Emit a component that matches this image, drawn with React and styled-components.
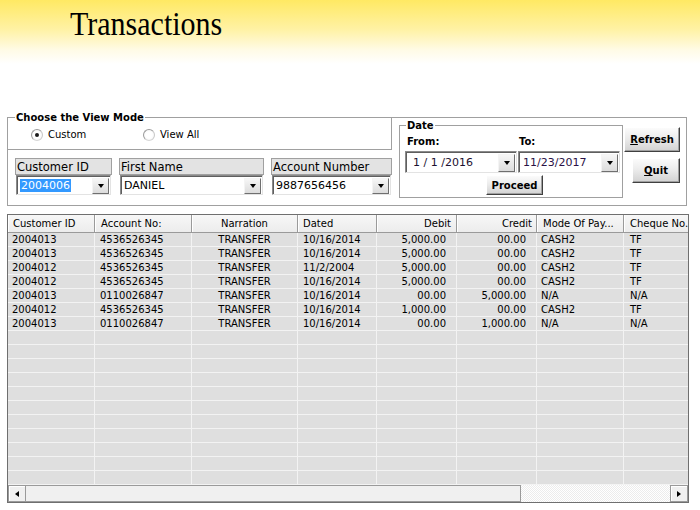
import React from 'react';
import styled, { createGlobalStyle } from 'styled-components';

const GlobalStyle = createGlobalStyle`
  html, body {
    margin: 0;
    padding: 0;
    background: #fff;
  }
  body {
    width: 700px;
    height: 510px;
    overflow: hidden;
    font-family: 'DejaVu Sans', Tahoma, sans-serif;
    font-size: 10px;
    color: #000;
  }
`;

const Window = styled.div`
  width: 700px;
  height: 510px;
  background: linear-gradient(to bottom, #ffe963 0px, #fff2a6 30px, #fffbe6 50px, #ffffff 64px, #ffffff 100%);
`;

const Banner = styled.header`
  height: 117px;
  box-sizing: border-box;
  padding: 6px 0 0 70px;
`;

const Title = styled.h1`
  margin: 0;
  display: inline-block;
  font-family: 'Liberation Serif', 'Times New Roman', serif;
  font-weight: normal;
  font-size: 30px;
  line-height: 32px;
  transform: scaleY(1.12);
  transform-origin: top left;
`;

const Panel = styled.section`
  margin-left: 7px;
  width: 680px;
  height: 89px;
  box-sizing: border-box;
  border: 1px solid #a0a0a0;
  display: flex;
  align-items: flex-start;
`;

const LeftColumn = styled.div`
  width: 384px;
  display: flex;
  flex-direction: column;
`;

const GroupBox = styled.div`
  box-sizing: border-box;
  border: 1px solid #a0a0a0;
  background: #fff;
`;

const ViewModeBox = styled(GroupBox)`
  margin: -1px 0 0 -1px;
  width: 385px;
  height: 33px;
`;

const DateBox = styled(GroupBox)`
  margin: 7px 0 0 7px;
  width: 224px;
  height: 73px;
`;

const Caption = styled.div`
  width: fit-content;
  margin: -7px 0 0 ${(p) => p.$indent}px;
  padding: 0 1px;
  background: #fff;
  font-weight: bold;
  font-size: 10px;
  line-height: 13px;
`;

const RadioRow = styled.div`
  display: flex;
  align-items: center;
  height: 13px;
  margin-top: 4px;
  padding-left: 23px;
`;

const RadioItem = styled.label`
  display: flex;
  align-items: center;
  gap: 5px;
  width: ${(p) => p.$width}px;
  font-size: 10px;
  line-height: 13px;
`;

const RadioCircle = styled.span`
  position: relative;
  width: 12px;
  height: 12px;
  box-sizing: border-box;
  border-radius: 50%;
  border: 1px solid #9b9b9b;
  border-right-color: #c8c8c8;
  border-bottom-color: #d6d6d6;
  background: radial-gradient(circle, #ffffff 45%, #ececec 100%);

  &::after {
    content: '';
    display: ${(p) => (p.$checked ? 'block' : 'none')};
    position: absolute;
    left: 3px;
    top: 3px;
    width: 4px;
    height: 4px;
    border-radius: 50%;
    background: #1a1a1a;
  }
`;

const FilterRow = styled.div`
  display: flex;
  gap: 7px;
  margin-top: 8px;
  padding-left: 7px;
`;

const Field = styled.div`
  display: flex;
  flex-direction: column;
  width: ${(p) => p.$width}px;
`;

const FieldLabel = styled.div`
  height: 17px;
  box-sizing: border-box;
  border: 1px solid #a0a0a0;
  background: #e3e3e3;
  padding-left: 1px;
  font-size: 11.5px;
  line-height: 16px;
  white-space: nowrap;
`;

const Combo = styled.div`
  display: flex;
  align-items: center;
  box-sizing: border-box;
  height: ${(p) => p.$height}px;
  width: ${(p) => (p.$width ? `${p.$width}px` : 'auto')};
  margin: ${(p) => (p.$inset ? '0 1px' : '0')};
  background: #fff;
  border: 1px solid;
  border-color: #8a8a8a #e3e3e3 #e3e3e3 #8a8a8a;
  box-shadow: inset 1px 1px 0 #5f5f5f;
  padding: 1px 1px 0 1px;
`;

const ComboText = styled.span`
  flex: 1;
  padding-left: ${(p) => p.$pad}px;
  font-size: 11px;
  line-height: 15px;
  color: ${(p) => p.$color || '#000'};
  white-space: nowrap;
`;

const Selected = styled.span`
  background: #3399ff;
  color: #fff;
  padding: 0 1px;
`;

const DropButton = styled.span`
  display: flex;
  align-items: center;
  justify-content: center;
  width: 17px;
  height: ${(p) => p.$height}px;
  box-sizing: border-box;
  border: 1px solid;
  border-color: #f4f4f4 #6f6f6f #6f6f6f #f4f4f4;
  background: linear-gradient(to bottom, #f6f6f6, #dcdcdc);
`;

const Arrow = styled.span`
  width: 0;
  height: 0;
  border-left: 3.5px solid transparent;
  border-right: 3.5px solid transparent;
  border-top: 4px solid #000;
`;

const DateLabels = styled.div`
  display: flex;
  margin-top: 3px;
  padding-left: 7px;
  font-weight: bold;
  font-size: 10px;
  line-height: 13px;
`;

const DateLabel = styled.span`
  width: ${(p) => p.$width}px;
`;

const DateCombos = styled.div`
  display: flex;
  gap: 1px;
  margin-top: 3px;
  padding-left: 5px;
`;

const Button = styled.button`
  display: block;
  width: ${(p) => p.$width}px;
  height: ${(p) => p.$height}px;
  margin: ${(p) => p.$margin || '0'};
  padding: 0;
  box-sizing: border-box;
  border: 1px solid;
  border-color: #ffffff #404040 #404040 #ffffff;
  box-shadow: inset -1px -1px 0 #a0a0a0;
  background: linear-gradient(to bottom, #fbfbfb 0%, #ececec 45%, #d2d2d2 100%);
  font-family: 'DejaVu Sans', Tahoma, sans-serif;
  font-weight: bold;
  font-size: 10px;
  color: #000;
`;

const ButtonColumn = styled.div`
  display: flex;
  flex-direction: column;
  align-items: flex-end;
  gap: 6px;
  width: 57px;
  margin-top: 9px;
`;

const TableBox = styled.div`
  margin: 8px 0 0 7px;
  width: 682px;
  height: 289px;
  box-sizing: border-box;
  border: 1px solid #6f6f6f;
  background: #dfdfdf;
  display: flex;
  flex-direction: column;
  overflow: hidden;
`;

const Grid = styled.div`
  display: grid;
  grid-template-columns: ${(p) => p.$cols};
  grid-auto-rows: 14px;
  grid-template-rows: 18px;
  flex: 1;
  overflow: hidden;
`;

const HeadCell = styled.div`
  box-sizing: border-box;
  height: 18px;
  border-right: 1px solid #9a9a9a;
  border-bottom: 1px solid #9a9a9a;
  box-shadow: inset 1px 0 0 #ffffff;
  background: linear-gradient(to bottom, #f7f7f7, #ececec);
  text-align: ${(p) => p.$align};
  padding: 0 ${(p) => (p.$align === 'right' ? p.$pad : 0)}px 0 ${(p) => (p.$align === 'left' ? p.$pad : 0)}px;
  line-height: 18px;
  white-space: nowrap;
  overflow: hidden;
`;

const Cell = styled.div`
  box-sizing: border-box;
  height: 14px;
  border-right: 1px solid #f3f3f3;
  border-bottom: 1px solid #f3f3f3;
  text-align: ${(p) => p.$align};
  padding: 0 ${(p) => (p.$align === 'right' ? p.$pad : 0)}px 0 ${(p) => (p.$align === 'left' ? p.$pad : 0)}px;
  line-height: 14px;
  white-space: nowrap;
  overflow: hidden;
`;

const ScrollBar = styled.div`
  display: flex;
  height: 17px;
  flex-shrink: 0;
  background: repeating-conic-gradient(#ececec 0% 25%, #ffffff 0% 50%) 0 0 / 2px 2px;
`;

const ScrollButton = styled.span`
  display: flex;
  align-items: center;
  justify-content: center;
  width: 18px;
  box-sizing: border-box;
  border: 1px solid #9a9a9a;
  box-shadow: inset 1px 1px 0 #ffffff;
  background: #f0f0f0;
  margin-left: ${(p) => (p.$end ? 'auto' : '0')};
`;

const ScrollArrow = styled.span`
  width: 0;
  height: 0;
  border-top: 3.5px solid transparent;
  border-bottom: 3.5px solid transparent;
  border-${(p) => (p.$dir === 'left' ? 'right' : 'left')}: 4px solid #000;
`;

const Thumb = styled.span`
  width: 495px;
  box-sizing: border-box;
  border: 1px solid #9a9a9a;
  border-left: none;
  background: #f0f0f0;
`;

const columns = [
  { label: 'Customer ID', width: 87, align: 'left', head: 5, cell: 4 },
  { label: 'Account No:', width: 97, align: 'left', head: 6, cell: 5 },
  { label: 'Narration', width: 106, align: 'center', head: 0, cell: 0 },
  { label: 'Dated', width: 79, align: 'left', head: 5, cell: 5 },
  { label: 'Debit', width: 80, align: 'right', head: 5, cell: 10 },
  { label: 'Credit', width: 80, align: 'right', head: 4, cell: 10 },
  { label: 'Mode Of Pay...', width: 87, align: 'left', head: 6, cell: 4 },
  { label: 'Cheque No.', width: 80, align: 'left', head: 6, cell: 6 },
];

const rows = [
  ['2004013', '4536526345', 'TRANSFER', '10/16/2014', '5,000.00', '00.00', 'CASH2', 'TF'],
  ['2004013', '4536526345', 'TRANSFER', '10/16/2014', '5,000.00', '00.00', 'CASH2', 'TF'],
  ['2004012', '4536526345', 'TRANSFER', '11/2/2004', '5,000.00', '00.00', 'CASH2', 'TF'],
  ['2004012', '4536526345', 'TRANSFER', '10/16/2014', '5,000.00', '00.00', 'CASH2', 'TF'],
  ['2004013', '0110026847', 'TRANSFER', '10/16/2014', '00.00', '5,000.00', 'N/A', 'N/A'],
  ['2004012', '4536526345', 'TRANSFER', '10/16/2014', '1,000.00', '00.00', 'CASH2', 'TF'],
  ['2004013', '0110026847', 'TRANSFER', '10/16/2014', '00.00', '1,000.00', 'N/A', 'N/A'],
];

const TOTAL_ROWS = 18;

const filters = [
  { label: 'Customer ID', value: '2004006', width: 97, selected: true },
  { label: 'First Name', value: 'DANIEL', width: 145 },
  { label: 'Account Number', value: '9887656456', width: 121 },
];

function App() {
  const allRows = [...rows];
  while (allRows.length < TOTAL_ROWS) allRows.push(columns.map(() => ''));

  return (
    <Window>
      <GlobalStyle />
      <Banner>
        <Title>Transactions</Title>
      </Banner>

      <Panel>
        <LeftColumn>
          <ViewModeBox>
            <Caption $indent={7}>Choose the View Mode</Caption>
            <RadioRow>
              <RadioItem $width={112}>
                <RadioCircle $checked />
                Custom
              </RadioItem>
              <RadioItem $width={90}>
                <RadioCircle />
                View All
              </RadioItem>
            </RadioRow>
          </ViewModeBox>

          <FilterRow>
            {filters.map((f) => (
              <Field key={f.label} $width={f.width}>
                <FieldLabel>{f.label}</FieldLabel>
                <Combo $height={20} $inset>
                  <ComboText $pad={2}>
                    {f.selected ? <Selected>{f.value}</Selected> : f.value}
                  </ComboText>
                  <DropButton $height={16}>
                    <Arrow />
                  </DropButton>
                </Combo>
              </Field>
            ))}
          </FilterRow>
        </LeftColumn>

        <DateBox>
          <Caption $indent={6}>Date</Caption>
          <DateLabels>
            <DateLabel $width={112}>From:</DateLabel>
            <DateLabel $width={60}>To:</DateLabel>
          </DateLabels>
          <DateCombos>
            <Combo $height={22} $width={112}>
              <ComboText $pad={6} $color="#1c1030">1 / 1 /2016</ComboText>
              <DropButton $height={18}>
                <Arrow />
              </DropButton>
            </Combo>
            <Combo $height={22} $width={102}>
              <ComboText $pad={3} $color="#2a1246">11/23/2017</ComboText>
              <DropButton $height={18}>
                <Arrow />
              </DropButton>
            </Combo>
          </DateCombos>
          <Button $width={57} $height={20} $margin="2px 0 0 86px">Proceed</Button>
        </DateBox>

        <ButtonColumn>
          <Button $width={56} $height={25}>
            <u>R</u>efresh
          </Button>
          <Button $width={48} $height={25}>
            <u>Q</u>uit
          </Button>
        </ButtonColumn>
      </Panel>

      <TableBox>
        <Grid $cols={columns.map((c) => `${c.width}px`).join(' ')}>
          {columns.map((c) => (
            <HeadCell key={c.label} $align={c.align} $pad={c.head}>
              {c.label}
            </HeadCell>
          ))}
          {allRows.map((r, i) =>
            r.map((v, j) => (
              <Cell key={`${i}-${j}`} $align={columns[j].align} $pad={columns[j].cell}>
                {v}
              </Cell>
            ))
          )}
        </Grid>
        <ScrollBar>
          <ScrollButton>
            <ScrollArrow $dir="left" />
          </ScrollButton>
          <Thumb />
          <ScrollButton $end>
            <ScrollArrow $dir="right" />
          </ScrollButton>
        </ScrollBar>
      </TableBox>
    </Window>
  );
}

export default App;
